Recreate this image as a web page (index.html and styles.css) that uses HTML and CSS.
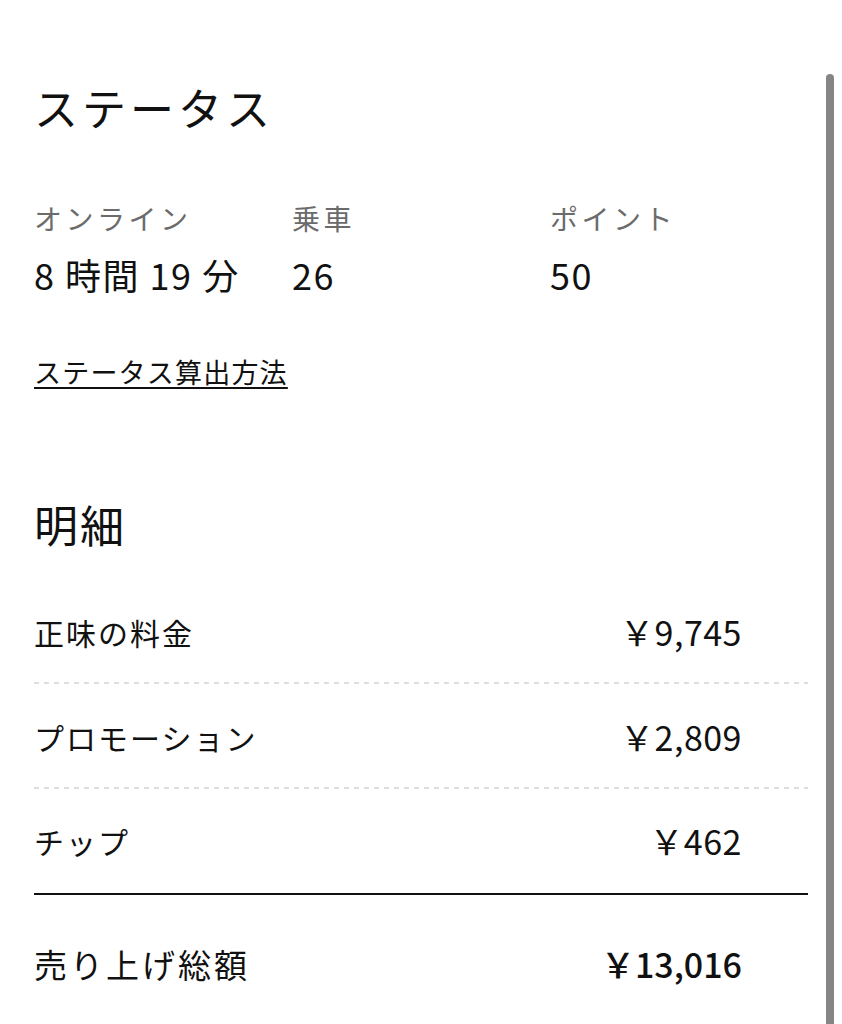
FILE: index.html
```html
<!DOCTYPE html>
<html lang="ja">
<head>
<meta charset="utf-8">
<link rel="stylesheet" href="styles.css">
</head>
<body>
<main class="page">
  <h1 class="title">ステータス</h1>
  <div class="stats">
    <div class="stat">
      <div class="stat-label">オンライン</div>
      <div class="stat-value">8 時間 19 分</div>
    </div>
    <div class="stat">
      <div class="stat-label">乗車</div>
      <div class="stat-value">26</div>
    </div>
    <div class="stat">
      <div class="stat-label">ポイント</div>
      <div class="stat-value">50</div>
    </div>
  </div>
  <a class="link" href="#">ステータス算出方法</a>

  <h2 class="title title-details">明細</h2>
  <ul class="rows">
    <li class="row"><span class="row-label">正味の料金</span><span class="row-amount">￥9,745</span></li>
    <li class="row"><span class="row-label">プロモーション</span><span class="row-amount">￥2,809</span></li>
    <li class="row row-last"><span class="row-label">チップ</span><span class="row-amount">￥462</span></li>
  </ul>
  <div class="total">
    <span class="row-label total-label">売り上げ総額</span><span class="row-amount total-amount">￥13,016</span>
  </div>
</main>
<div class="scrollbar"></div>
</body>
</html>
```

FILE: styles.css
```css
html, body {
  margin: 0;
  padding: 0;
  background: #ffffff;
}

body {
  font-family: "Noto Sans CJK JP", "Noto Sans", sans-serif;
  color: #111111;
  width: 842px;
  height: 1024px;
  overflow: hidden;
  position: relative;
}

.page {
  width: 774px;
  padding: 85px 0 0 34px;
  display: flex;
  flex-direction: column;
}

.title {
  margin: 0;
  font-size: 44px;
  font-weight: 400;
  line-height: 44px;
  letter-spacing: 4px;
}

.stats {
  margin-top: 69px;
  display: grid;
  grid-template-columns: 258px 258px 258px;
}

.stat {
  display: flex;
  flex-direction: column;
  gap: 16px;
}

.stat-label {
  font-size: 28px;
  line-height: 40px;
  color: #6b6b6b;
  letter-spacing: 3.5px;
}

.stat-value {
  font-size: 36px;
  line-height: 40px;
  color: #111111;
  letter-spacing: 1.5px;
}

.link {
  margin-top: 60px;
  align-self: flex-start;
  font-size: 27px;
  line-height: 36px;
  color: #111111;
  letter-spacing: 1.2px;
  text-decoration: underline;
  text-decoration-thickness: 2px;
  text-underline-offset: 4px;
}

.title-details {
  margin-top: 112px;
  letter-spacing: 2px;
}

.rows {
  list-style: none;
  margin: 33px 0 0 0;
  padding: 0;
}

.row {
  height: 105px;
  display: flex;
  align-items: center;
  justify-content: space-between;
  padding-right: 66px;
  box-sizing: border-box;
  background-image: repeating-linear-gradient(to right, #dedede 0 5px, transparent 5px 10px);
  background-size: 100% 2px;
  background-position: left bottom;
  background-repeat: no-repeat;
}

.row-last {
  background: none;
  border-bottom: 2px solid #111111;
  height: 106px;
}

.row-label {
  font-size: 30px;
  line-height: 40px;
  color: #111111;
  letter-spacing: 2px;
}

.row-amount {
  font-size: 34px;
  line-height: 40px;
  font-weight: 400;
  color: #111111;
  letter-spacing: 0.5px;
}

.total {
  height: 138px;
  display: flex;
  align-items: center;
  justify-content: space-between;
  padding-right: 66px;
}

.total-label {
  font-size: 33px;
  letter-spacing: 3px;
}

.total-amount {
  font-weight: 500;
  letter-spacing: 0;
}

.scrollbar {
  position: absolute;
  left: 826px;
  top: 74px;
  width: 8px;
  height: 960px;
  background: #858585;
  border-radius: 4px 4px 0 0;
}
```
